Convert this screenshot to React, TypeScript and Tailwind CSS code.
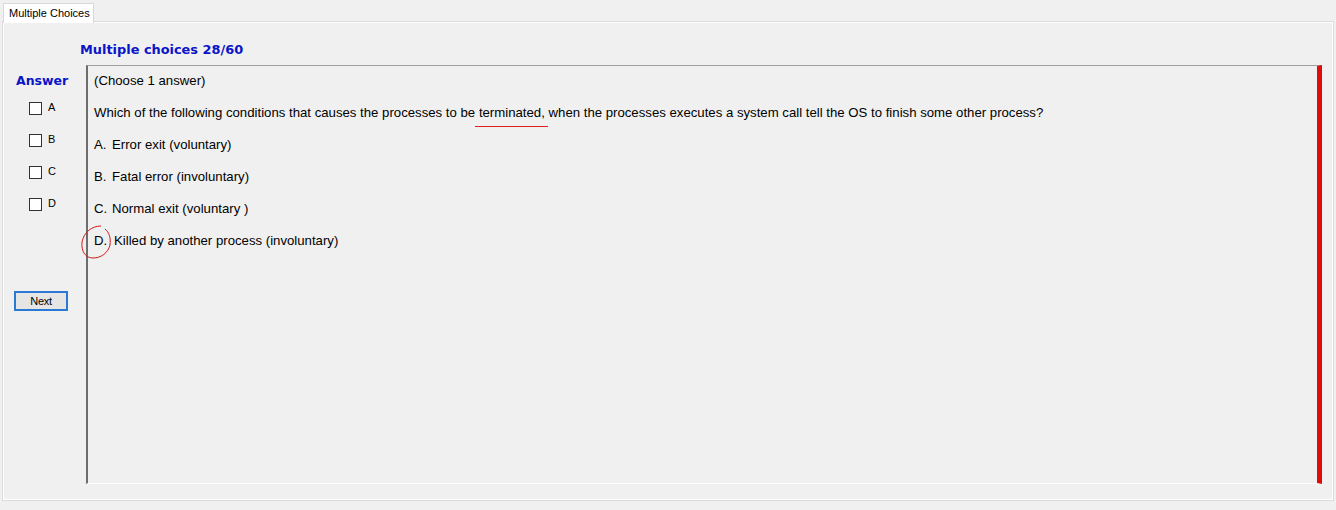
const options = [
	{ key: "A", text: "Error exit (voluntary)" },
	{ key: "B", text: "Fatal error (involuntary)" },
	{ key: "C", text: "Normal exit (voluntary )" },
	{ key: "D", text: "Killed by another process (involuntary)" },
];

export default function App() {
	return (
		<div className="w-[1336px] h-[510px] bg-[#f0f0f0] px-[3px] pt-[3px] font-['Liberation_Sans',Arial,sans-serif] text-black overflow-hidden">
			{/* tab strip */}
			<div className="flex h-[19px]">
				<div className="w-[91px] h-[20px] bg-white border border-b-0 border-[#d9d9d9] text-[11px] leading-[18px] pl-[5px] relative z-10">
					Multiple Choices
				</div>
			</div>
			{/* tab page */}
			<div className="h-[478px] w-[1330px] border border-white bg-[#f0f0f0] shadow-[0_0_0_1px_#dcdcdc]">
				<div className="pl-[76px] pt-[19px] h-[42px] font-['DejaVu_Sans',Verdana,sans-serif] text-[12.9px] font-bold text-[#0a14c8] leading-[16px]">
					Multiple choices 28/60
				</div>
				<div className="flex">
					{/* answer column */}
					<div className="w-[82px] shrink-0 flex flex-col">
						<div className="pl-[12px] pt-[8px] font-['DejaVu_Sans',Verdana,sans-serif] text-[12.5px] font-bold text-[#0a14c8] leading-[16px]">
							Answer
						</div>
						<div className="flex flex-col gap-[19px] pl-[25px] pt-[13px]">
							{options.map((o) => (
								<div key={o.key} className="flex items-center gap-[6px] h-[13px]">
									<div className="w-[13px] h-[13px] border border-[#333] bg-white" />
									<span className="text-[11px] leading-[13px] -mt-[2px]">{o.key}</span>
								</div>
							))}
						</div>
						<div className="pl-[10px] pt-[77px]">
							<button className="w-[54px] h-[20px] border-2 border-[#2a7ad4] bg-[#e5e5e5] text-[11px] leading-[14px] tracking-[-0.3px]">
								Next
							</button>
						</div>
					</div>
					{/* question box */}
					<div className="w-[1236px] h-[419px] border-t border-t-[#a0a0a0] border-l-2 border-l-[#6d6d6d] border-b border-b-white border-r-[5px] border-r-[#e00c0c] pl-[6px] pt-[7px] text-[13.2px] leading-[15px]">
						<div className="h-[32px]">(Choose 1 answer)</div>
						<div className="h-[32px]">
							Which of the following conditions that causes the processes to be{" "}
							<span className="relative">
								terminated,
								<span className="absolute left-[-4px] right-[-3px] top-[21px] h-[1px] bg-[#e02020]" />
							</span>{" "}
							when the processes executes a system call tell the OS to finish some other process?
						</div>
						{options.map((o) => (
							<div key={o.key} className="h-[32px] flex">
								<span className={`relative ${o.key === "D" ? "w-[20px]" : "w-[18px]"}`}>
									{o.key}.
									{o.key === "D" && (
										<svg
											className="absolute left-[-14px] top-[-9px]"
											width="34"
											height="38"
											viewBox="0 0 34 38"
										>
											<path
												d="M 21 2 C 12 2 4 8 2 18 C 1 28 6 34 13 34 C 21 34 28 29 30 21 C 31 14 29 8 25 5"
												fill="none"
												stroke="#d01818"
												strokeWidth="1"
											/>
										</svg>
									)}
								</span>
								<span>{o.text}</span>
							</div>
						))}
					</div>
				</div>
			</div>
		</div>
	);
}
